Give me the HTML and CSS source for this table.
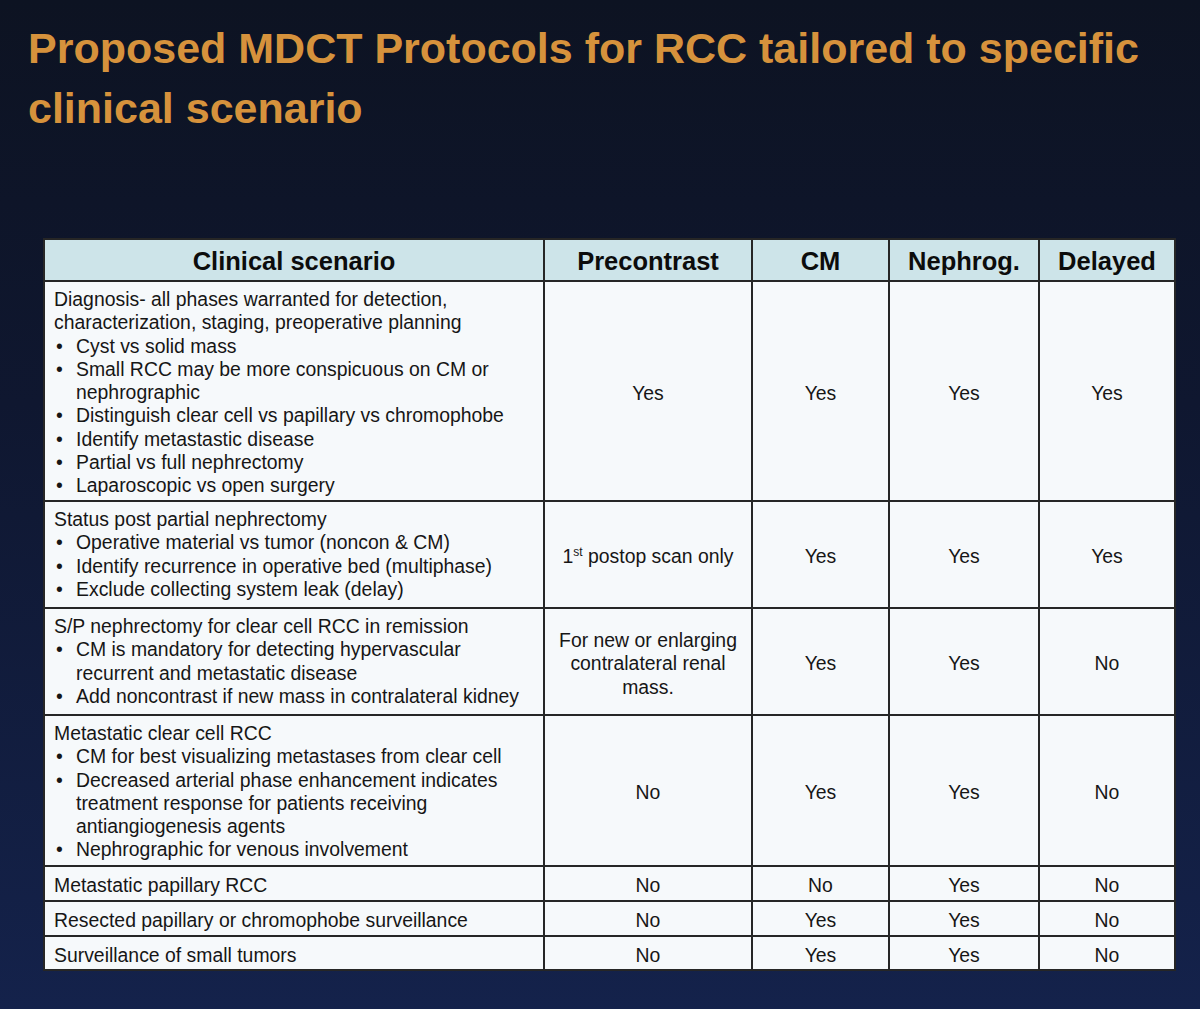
FILE: index.html
```html
<!DOCTYPE html>
<html lang="en">
<head>
<meta charset="utf-8">
<title>Proposed MDCT Protocols for RCC</title>
<link rel="stylesheet" href="styles.css">
</head>
<body>
<main class="slide">
  <h1 class="title">Proposed MDCT Protocols for RCC tailored to specific clinical scenario</h1>
  <table class="protocols">
    <colgroup>
      <col class="c-scn"><col class="c-pre"><col class="c-cm"><col class="c-neph"><col class="c-del">
    </colgroup>
    <thead>
      <tr class="r-head">
        <th>Clinical scenario</th><th>Precontrast</th><th>CM</th><th>Nephrog.</th><th>Delayed</th>
      </tr>
    </thead>
    <tbody>
      <tr class="r1">
        <td class="scn">Diagnosis- all phases warranted for detection, characterization, staging, preoperative planning
          <ul>
            <li>Cyst vs solid mass</li>
            <li>Small RCC may be more conspicuous on CM or nephrographic</li>
            <li>Distinguish clear cell vs papillary vs chromophobe</li>
            <li>Identify metastastic disease</li>
            <li>Partial vs full nephrectomy</li>
            <li>Laparoscopic vs open surgery</li>
          </ul>
        </td>
        <td>Yes</td><td>Yes</td><td>Yes</td><td>Yes</td>
      </tr>
      <tr class="r2">
        <td class="scn">Status post partial nephrectomy
          <ul>
            <li>Operative material vs tumor (noncon &amp; CM)</li>
            <li>Identify recurrence in operative bed (multiphase)</li>
            <li>Exclude collecting system leak (delay)</li>
          </ul>
        </td>
        <td class="pre-note">1<sup>st</sup> postop scan only</td><td>Yes</td><td>Yes</td><td>Yes</td>
      </tr>
      <tr class="r3">
        <td class="scn">S/P nephrectomy for clear cell RCC in remission
          <ul>
            <li>CM is mandatory for detecting hypervascular recurrent and metastatic disease</li>
            <li>Add noncontrast if new mass in contralateral kidney</li>
          </ul>
        </td>
        <td class="pre-note">For new or enlarging contralateral renal mass.</td><td>Yes</td><td>Yes</td><td>No</td>
      </tr>
      <tr class="r4">
        <td class="scn">Metastatic clear cell RCC
          <ul>
            <li>CM for best visualizing metastases from clear cell</li>
            <li>Decreased arterial phase enhancement indicates treatment response for patients receiving antiangiogenesis agents</li>
            <li>Nephrographic for venous involvement</li>
          </ul>
        </td>
        <td>No</td><td>Yes</td><td>Yes</td><td>No</td>
      </tr>
      <tr class="r5">
        <td class="scn">Metastatic papillary RCC</td>
        <td>No</td><td>No</td><td>Yes</td><td>No</td>
      </tr>
      <tr class="r6">
        <td class="scn">Resected papillary or chromophobe surveillance</td>
        <td>No</td><td>Yes</td><td>Yes</td><td>No</td>
      </tr>
      <tr class="r7">
        <td class="scn">Surveillance of small tumors</td>
        <td>No</td><td>Yes</td><td>Yes</td><td>No</td>
      </tr>
    </tbody>
  </table>
</main>
</body>
</html>
```
FILE: styles.css
```css
html, body {
  margin: 0;
  padding: 0;
}
body {
  width: 1200px;
  height: 1009px;
  overflow: hidden;
  background: linear-gradient(to bottom, #0d1322 0%, #0f1730 40%, #14224b 100%);
  font-family: "Liberation Sans", Arial, sans-serif;
}
.slide {
  padding: 18px 0 0 28px;
}
.title {
  margin: 0;
  width: 1150px;
  font-size: 43px;
  line-height: 60px;
  font-weight: bold;
  color: #d6923c;
}
.protocols {
  margin: 100px 0 0 15px;
  width: 1131px;
  table-layout: fixed;
  border-collapse: collapse;
  color: #161616;
  font-size: 19.4px;
  line-height: 23.25px;
}
.c-scn { width: 500px; }
.c-pre { width: 208px; }
.c-cm { width: 137px; }
.c-neph { width: 150px; }
.c-del { width: 136px; }

.protocols th,
.protocols td {
  border: 2px solid #262626;
  padding: 5px 0 0 0;
  text-align: center;
  vertical-align: middle;
  background: #f6f9fb;
}
.protocols th {
  background: #cde4e9;
  font-size: 25.5px;
  font-weight: bold;
  color: #0c0c0c;
  height: 36px;
  padding-top: 4px;
}
.protocols td.scn {
  text-align: left;
  vertical-align: top;
  padding: 6px 8px 0 9px;
}
.protocols td.pre-note {
  padding: 5px 12px 0;
}
.protocols ul {
  margin: 0;
  padding: 0;
  list-style: none;
}
.protocols li {
  padding-left: 22px;
  text-indent: -22px;
}
.protocols li::before {
  content: "\2022";
  display: inline-block;
  width: 22px;
  padding-left: 2px;
  box-sizing: border-box;
  text-indent: 0;
}
.protocols sup {
  font-size: 12px;
  line-height: 0;
  vertical-align: 7px;
}
.r1 td { height: 212px; }
.r2 td { height: 99px; }
.r3 td { height: 99px; }
.r4 td { height: 143px; }
.r5 td, .r6 td { height: 28px; }
.r7 td { height: 27px; }
.r5 td.scn, .r6 td.scn, .r7 td.scn {
  vertical-align: middle;
  padding-top: 5px;
}
```
